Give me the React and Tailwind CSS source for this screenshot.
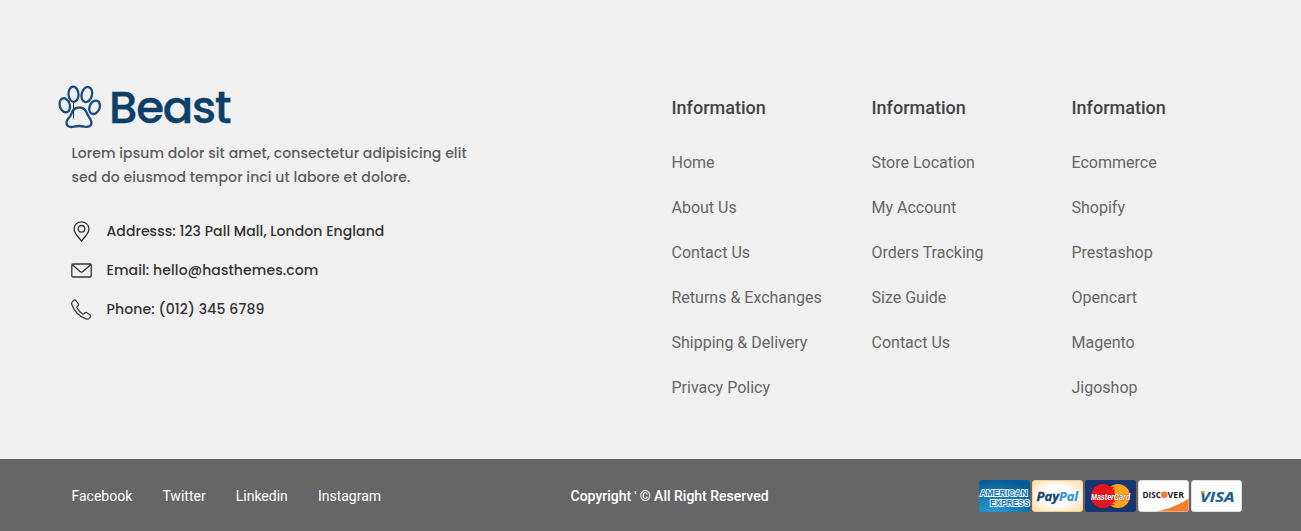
const columns = [
  ["Home", "About Us", "Contact Us", "Returns & Exchanges", "Shipping & Delivery", "Privacy Policy"],
  ["Store Location", "My Account", "Orders Tracking", "Size Guide", "Contact Us"],
  ["Ecommerce", "Shopify", "Prestashop", "Opencart", "Magento", "Jigoshop"],
];

const geo = "font-['Poppins',sans-serif] font-medium whitespace-nowrap";

function Logo() {
  return (
    <svg width="190" height="50" viewBox="57 82 190 50" className="-ml-[14.5px] block overflow-visible">
      <g fill="none" stroke="#1c4d7c" strokeWidth="2.300" strokeLinecap="round" strokeLinejoin="round">
        <ellipse cx="73.500" cy="94.300" rx="5" ry="7.600" transform="rotate(-4 73.500 94.300)" />
        <ellipse cx="86.800" cy="94.500" rx="5.200" ry="7.700" transform="rotate(14 86.800 94.500)" />
        <ellipse cx="64.800" cy="105.300" rx="5" ry="7.200" transform="rotate(-18 64.800 105.300)" />
        <ellipse cx="94.600" cy="107.300" rx="5" ry="7" transform="rotate(24 94.600 107.300)" />
        <path d="M79.500 107.500C75 107.500 72.300 110.500 71.300 114C70.300 117.500 66.500 118.600 66.500 122.500C66.500 126.800 70.500 127.600 74 126.600C77.500 125.800 81 125.800 84.500 126.600C88.500 127.400 91.600 126.300 91.400 122.500C91.200 118.800 88.500 117 87.300 114C86.100 110.500 84 107.500 79.500 107.500Z" />
      </g>
      <path d="M73.500 101v17.500" stroke="#222b38" strokeWidth="1" />
      <text x="109" y="123" fill="#0d4068" stroke="#0d4068" strokeWidth=".4" fontSize="45" fontWeight="500" textLength="122.500" lengthAdjust="spacing" className="font-['Poppins',sans-serif]">Beast</text>
    </svg>
  );
}

function PinIcon() {
  return (
    <svg width="21" height="21" viewBox="0 0 21 21" fill="none" stroke="#333" strokeWidth="1.300">
      <path d="M10.500 .9C6.300 .9 3.100 3.900 3.100 7.900C3.100 12.500 7.600 16 10.500 20.100C13.400 16 17.900 12.500 17.900 7.900C17.900 3.900 14.700 .9 10.500 .9Z" />
      <circle cx="10.500" cy="7.800" r="3.300" />
    </svg>
  );
}

function MailIcon() {
  return (
    <svg width="21" height="21" viewBox="0 0 21 21" fill="none" stroke="#333" strokeWidth="1.300" strokeLinejoin="round">
      <rect x=".8" y="4" width="19.400" height="13" rx="1" />
      <path d="M1.200 4.500L9 11.600Q10.500 12.800 12 11.600L19.800 4.500" />
    </svg>
  );
}

function PhoneIcon() {
  return (
    <svg width="21" height="21" viewBox="0 0 21 21" fill="none" stroke="#333" strokeWidth="1.200" strokeLinejoin="round">
      <path d="M1.300 2.800L3.100 1.100Q4 .5 4.800 1.400L7.300 4.900Q7.900 5.900 7.100 6.700L6.100 7.700Q5.600 8.300 6 9C7.300 11.300 9.300 13.400 11.700 14.900Q12.400 15.300 13 14.800L14.100 13.800Q14.900 13.100 15.800 13.700L19.300 16.100Q20.200 16.900 19.500 17.800L18 19.400C17.300 20.100 16.200 20.200 15.200 19.900C8.800 17.800 3.400 12.600 1 6C.5 4.600 .6 3.500 1.300 2.800Z" />
    </svg>
  );
}

function Cards() {
  return (
    <div className="flex gap-[2px]">
      <svg width="51" height="32" viewBox="0 0 51 32" className="overflow-visible">
        <defs>
          <radialGradient id="amex" cx=".3" cy="1" r="1"><stop stopColor="#2b9bd2" /><stop offset="1" stopColor="#075c94" /></radialGradient>
        </defs>
        <rect width="51" height="32" rx="2.500" fill="url(#amex)" />
        <g className="font-['Liberation_Sans',sans-serif] font-bold" fontSize="9.500" fill="#1272ae" stroke="#f3fbff" strokeWidth="1.800" paintOrder="stroke">
          <text x="1" y="15.500" textLength="47.500" lengthAdjust="spacingAndGlyphs">AMERICAN</text>
          <text x="11" y="26" textLength="39.500" lengthAdjust="spacingAndGlyphs">EXPRESS</text>
        </g>
      </svg>
      <svg width="51" height="32" viewBox="0 0 51 32">
        <defs>
          <radialGradient id="paypal" cx=".5" cy=".5" r=".68"><stop offset=".45" stopColor="#fff" /><stop offset="1" stopColor="#ffdaa3" /></radialGradient>
        </defs>
        <rect x=".5" y=".5" width="50" height="31" rx="2.500" fill="url(#paypal)" stroke="#f7cf98" />
        <g className="font-['Open_Sans',sans-serif] font-bold italic" fontSize="12">
          <text x="4.500" y="20.500" fill="#1d3e78" stroke="#1d3e78" strokeWidth=".3" textLength="22.500" lengthAdjust="spacingAndGlyphs">Pay</text>
          <text x="27" y="20.500" fill="#2a93cf" stroke="#2a93cf" strokeWidth=".2" textLength="19" lengthAdjust="spacingAndGlyphs">Pal</text>
        </g>
      </svg>
      <svg width="51" height="32" viewBox="0 0 51 32" className="overflow-visible">
        <rect width="51" height="32" rx="2.500" fill="#17356f" />
        <circle cx="33" cy="16" r="12" fill="#f8a51b" />
        <circle cx="18" cy="16" r="12" fill="#e3171d" />
        <path d="M25.800 7.500h3.500M24 10.500h6M24 21.500h6M25.800 24.500h3.500" stroke="#e3171d" strokeWidth="1.500" />
        <text x="6" y="19.500" fontSize="9" fill="#fff" stroke="#7b2330" strokeWidth=".7" paintOrder="stroke" textLength="39" lengthAdjust="spacingAndGlyphs" className="font-['Liberation_Sans',sans-serif] font-bold italic">MasterCard</text>
      </svg>
      <svg width="51" height="32" viewBox="0 0 51 32">
        <rect x=".5" y=".5" width="50" height="31" rx="2.500" fill="#fff" stroke="#ddd" />
        <path d="M18 31.500Q37 28 50.500 18.500V29Q50.500 31.500 48 31.500Z" fill="#f57c2c" />
        <g className="font-['Open_Sans',sans-serif] font-bold" fontSize="9" fill="#1c1c1c">
          <text x="4.500" y="18" textLength="18.500" lengthAdjust="spacingAndGlyphs">DISC</text>
          <text x="29.500" y="18" textLength="16.500" lengthAdjust="spacingAndGlyphs">VER</text>
        </g>
        <circle cx="26.300" cy="14.700" r="3.300" fill="#f27a3a" />
      </svg>
      <svg width="51" height="32" viewBox="0 0 51 32">
        <rect x=".5" y=".5" width="50" height="31" rx="2.500" fill="#fcfcfc" stroke="#ddd" />
        <text x="9" y="22" fontSize="15" fill="#1b6294" stroke="#1b6294" strokeWidth=".2" textLength="34.500" lengthAdjust="spacingAndGlyphs" className="font-['Open_Sans',sans-serif] font-bold italic">VISA</text>
        <path d="M9 11h4l1.200 5Q12 12.500 9 11Z" fill="#d5a52c" />
      </svg>
    </div>
  );
}

export default function App() {
  return (
    <footer className="flex h-[531px] w-[1301px] flex-col overflow-hidden bg-[#f0f0f0] font-['Roboto',sans-serif]">
      <div className="flex h-[459px] pl-[71.5px]">
        <section className="w-[600px] pt-[82px]">
          <Logo />
          <div className={`${geo} mt-[9px] text-[14px] leading-6 tracking-[0.08px] text-[#5c5c5c]`}>
            <p>Lorem ipsum dolor sit amet, consectetur adipisicing elit</p>
            <p className="tracking-[0.1px]">sed do eiusmod tempor inci ut labore et dolore.</p>
          </div>
          <ul className={`${geo} mt-[30px] -ml-[0.6px] flex flex-col gap-[15px] text-[14px] leading-6 text-[#333]`}>
            <li className="flex items-center gap-[14.6px]"><PinIcon /><span className="tracking-[0.07px]">Addresss: 123 Pall Mall, London England</span></li>
            <li className="flex items-center gap-[14.6px]"><MailIcon /><span className="tracking-[0.11px]">Email: hello@hasthemes.com</span></li>
            <li className="flex items-center gap-[14.6px]"><PhoneIcon /><span className="tracking-[0.14px]">Phone: (012) 345 6789</span></li>
          </ul>
        </section>
        <nav className="flex pt-[96px]">
          {columns.map((links, i) => (
            <div key={i} className="w-[200px]">
              <h3 className="text-[18px] leading-6 font-medium text-[#444]">Information</h3>
              <ul className="mt-[31px] flex flex-col gap-[21px] text-[16px] leading-6 text-[#666]">
                {links.map((link) => <li key={link}>{link}</li>)}
              </ul>
            </div>
          ))}
        </nav>
      </div>
      <div className="flex h-[72px] items-center bg-[#666] pt-[2px] pl-[71.5px] text-[14px] leading-6 text-white">
        <div className="flex w-[499px] gap-[30.1px]">
          <span>Facebook</span><span>Twitter</span><span>Linkedin</span><span>Instagram</span>
        </div>
        <div className="flex w-[408px] font-medium">
          <span>Copyright</span>
          <span className="w-[8.500px] text-center text-[13px] leading-[25px] font-normal">'</span>
          <span>© All Right Reserved</span>
        </div>
        <Cards />
      </div>
    </footer>
  );
}
